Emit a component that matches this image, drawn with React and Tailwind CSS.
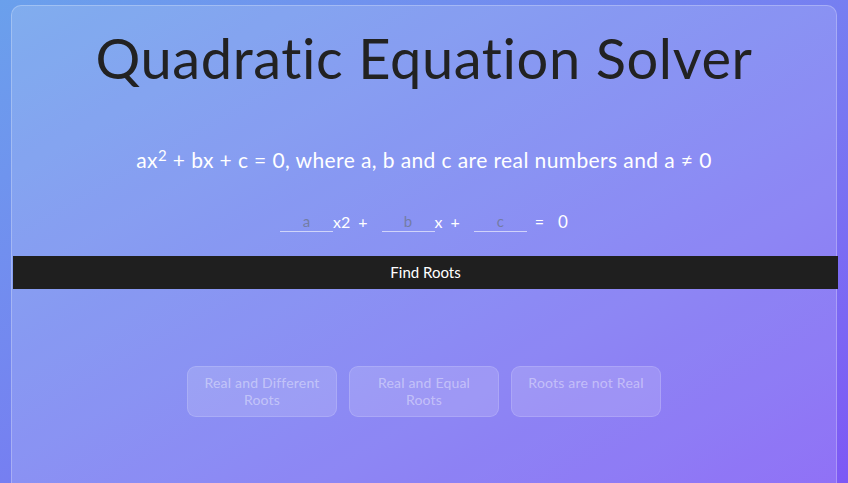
import React from 'react';

export default function App() {
    const kinds = ['Real and Different Roots', 'Real and Equal Roots', 'Roots are not Real'];

    return (
        <div
            className="min-h-screen w-full bg-gradient-to-br from-[#6aa0ec] to-[#7d58f5] px-[11px] pt-[5px] text-white"
            style={{ fontFamily: '"Lato", "Noto Sans", sans-serif' }}
        >
            <div className="min-h-[478px] rounded-t-[10px] border border-b-0 border-white/25 bg-white/15">
                {/* Title */}
                <h1 className="pt-[18px] text-center text-[56px] leading-[68px] font-normal tracking-[0.6px] text-[#222222]">
                    Quadratic Equation Solver
                </h1>

                <p className="mt-[54px] text-center text-[21px] leading-[28px] tracking-[0.4px] text-white">
                    ax<sup className="text-[15px]">2</sup> + bx + c = 0, where a, b and c are real numbers and a ≠ 0
                </p>

                {/* Coefficients */}
                <div className="mt-[37px] flex items-center justify-center text-[16px] leading-[20px]">
                    <input
                        placeholder="a"
                        className="w-[53px] border-b border-white/60 bg-transparent text-center text-[15px] text-gray-700 placeholder:text-gray-500/70 outline-none"
                    />
                    <span>x2</span>
                    <span className="ml-[8px] mr-[14px]">+</span>
                    <input
                        placeholder="b"
                        className="w-[53px] border-b border-white/60 bg-transparent text-center text-[15px] text-gray-700 placeholder:text-gray-500/70 outline-none"
                    />
                    <span>x</span>
                    <span className="ml-[8px] mr-[14px]">+</span>
                    <input
                        placeholder="c"
                        className="w-[53px] border-b border-white/60 bg-transparent text-center text-[15px] text-gray-700 placeholder:text-gray-500/70 outline-none"
                    />
                    <span className="ml-[8px]">=</span>
                    <span className="ml-[14px] text-[17px]">0</span>
                </div>

                <button className="mt-[24px] ml-[1px] block h-[33px] w-[825px] bg-[#1f1f1f] text-[15px] text-white">
                    Find Roots
                </button>

                {/* Result types */}
                <div className="mt-[77px] flex justify-center gap-[12px]">
                    {kinds.map((k) => (
                        <div
                            key={k}
                            className="h-[51px] w-[150px] rounded-[9px] border border-white/15 bg-white/15 px-[14px] pt-[7px] text-center text-[14px] leading-[17px] tracking-[0.2px] text-white/40"
                        >
                            {k}
                        </div>
                    ))}
                </div>
            </div>
        </div>
    );
}
